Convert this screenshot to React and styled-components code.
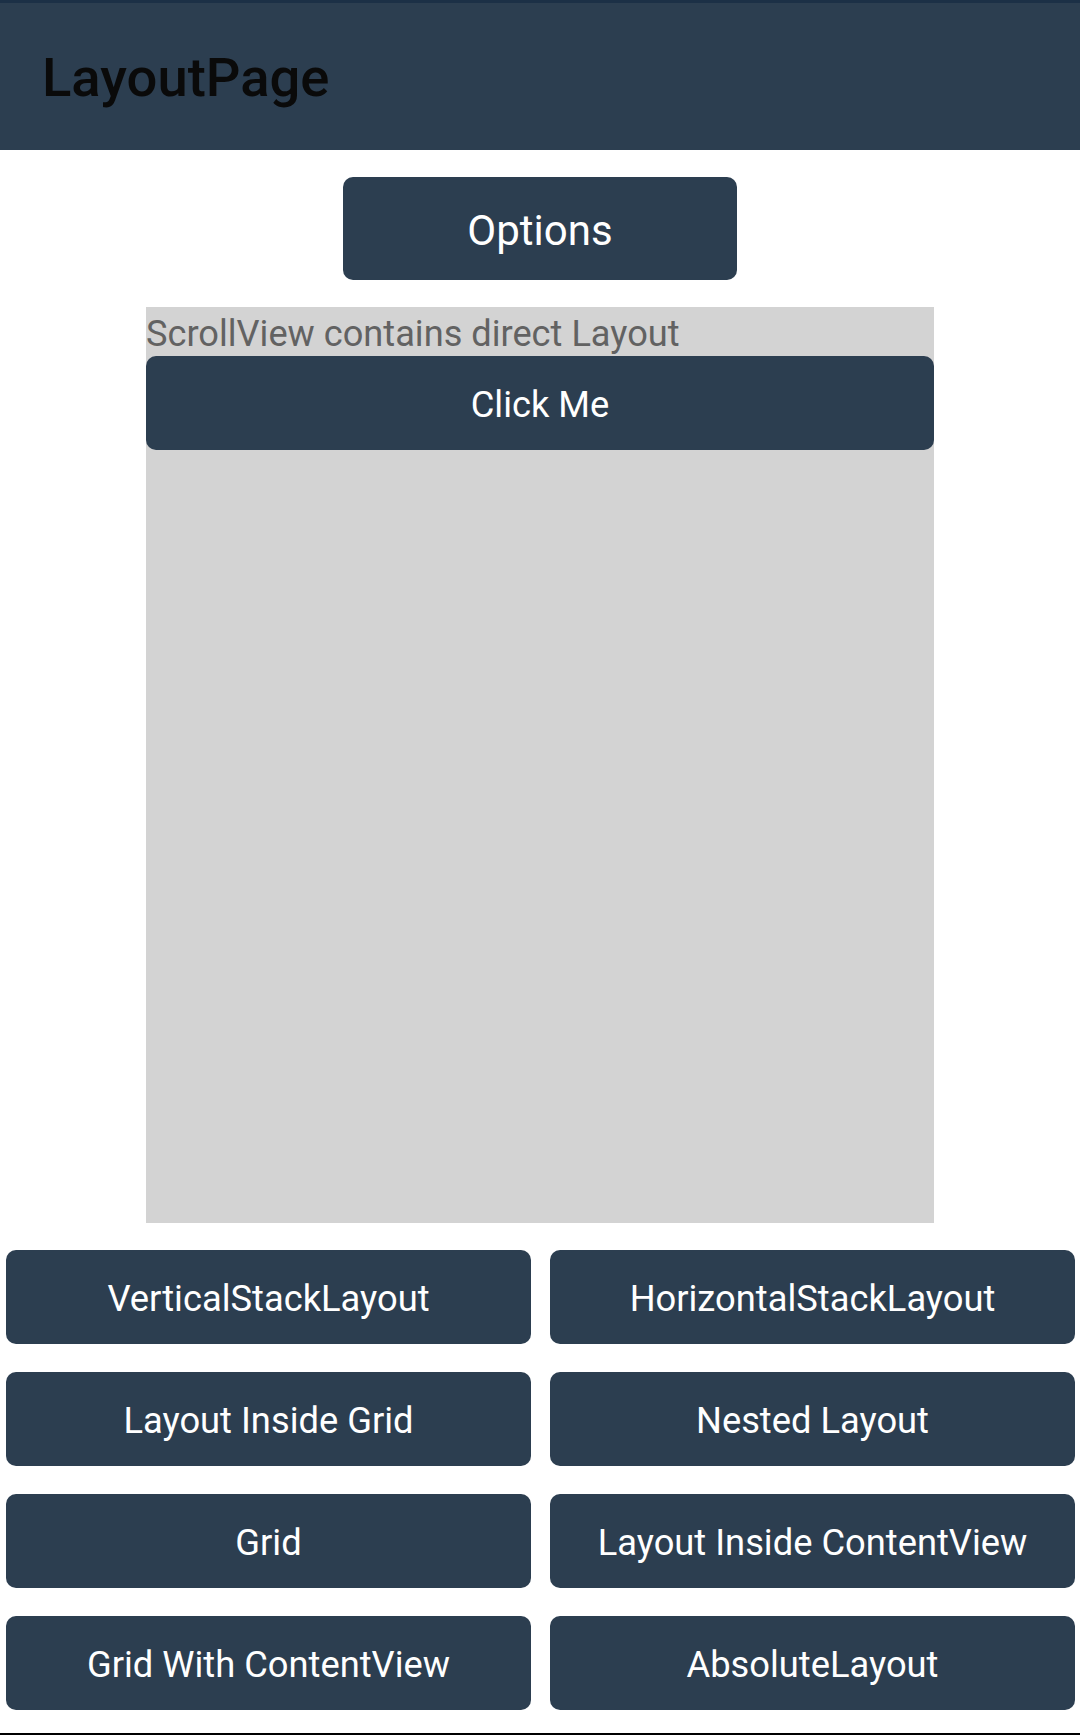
import React from "react";
import styled, { createGlobalStyle } from "styled-components";

const Global = createGlobalStyle`
  html, body { margin: 0; padding: 0; background: #ffffff; }
  body { font-family: Roboto, "Noto Sans", "Liberation Sans", sans-serif; }
  * { box-sizing: border-box; }
`;

const Page = styled.div`
  display: flex;
  flex-direction: column;
  min-height: 1735px;
  background: #ffffff;
`;

const Header = styled.header`
  height: 150px;
  background: #2c3e50;
  border-top: 3px solid #1c3046;
  padding: 48px 0 0 42px;
`;

const Title = styled.h1`
  margin: 0;
  font-size: 54.4px;
  line-height: 1;
  font-weight: 500;
  color: #0a0a0a;
`;

const Main = styled.main`
  display: flex;
  flex-direction: column;
  align-items: center;
  padding-top: 27px;
  gap: 27px;
`;

const Button = styled.button`
  display: flex;
  align-items: center;
  justify-content: center;
  border: none;
  margin: 0;
  padding: ${(p) => (p.$big ? "5px 0 0" : "4px 0 0")};
  background: #2c3e50;
  color: #ffffff;
  font-family: Roboto, "Noto Sans", "Liberation Sans", sans-serif;
  font-size: ${(p) => (p.$big ? "42px" : "36.3px")};
  font-weight: 400;
  border-radius: 10px;
  height: ${(p) => (p.$big ? "102.5px" : "94.5px")};
  width: ${(p) => p.$width || "100%"};
  white-space: nowrap;
  cursor: pointer;
`;

const ScrollBox = styled.section`
  width: 788px;
  height: 916px;
  background: #d3d3d3;
  display: flex;
  flex-direction: column;
`;

const Label = styled.div`
  height: 49px;
  padding-top: 5px;
  font-size: 36.2px;
  line-height: 44px;
  color: #626262;
  white-space: nowrap;
`;

const Grid = styled.div`
  display: grid;
  grid-template-columns: 1fr 1fr;
  column-gap: 19px;
  row-gap: 27.5px;
  padding: 0 5px 0 6px;
  width: 100%;
`;

const Spacer = styled.div`
  flex: 1;
`;

const NavLine = styled.div`
  height: 2px;
  background: #000000;
`;

const items = [
  "VerticalStackLayout",
  "HorizontalStackLayout",
  "Layout Inside Grid",
  "Nested Layout",
  "Grid",
  "Layout Inside ContentView",
  "Grid With ContentView",
  "AbsoluteLayout",
];

export default function App() {
  return (
    <>
      <Global />
      <Page>
        <Header>
          <Title>LayoutPage</Title>
        </Header>
        <Main>
          <Button $big $width="394px">Options</Button>
          <ScrollBox>
            <Label>ScrollView contains direct Layout</Label>
            <Button>Click Me</Button>
          </ScrollBox>
          <Grid>
            {items.map((t) => (
              <Button key={t}>{t}</Button>
            ))}
          </Grid>
        </Main>
        <Spacer />
        <NavLine />
      </Page>
    </>
  );
}
